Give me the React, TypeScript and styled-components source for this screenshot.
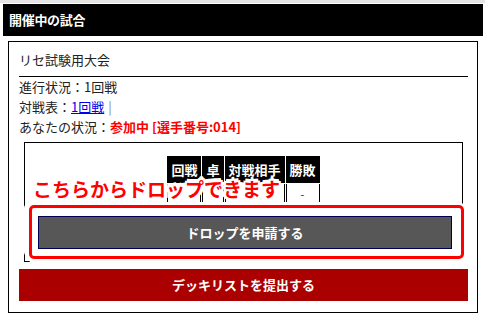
import React from 'react';
import styled, { createGlobalStyle } from 'styled-components';

const GlobalStyle = createGlobalStyle`
  body {
    margin: 0;
    background: #fff;
    font-family: "Noto Sans CJK JP", "Noto Sans", sans-serif;
    color: #222;
  }
`;

const Page = styled.div`
  width: 485px;
  border-top: 3px solid #e4e4e4;
  padding-top: 1px;
`;

const HeaderBar = styled.div`
  margin: 0 2px 0 3px;
  height: 32px;
  background: #000;
  color: #fff;
  font-size: 13px;
  font-weight: bold;
  line-height: 32px;
  padding-left: 6px;
  letter-spacing: -0.3px;
`;

const Card = styled.div`
  margin: 5px 7px 0 8px;
  border: 1px solid #000;
  padding: 0 9px 11px 10px;
`;

const Title = styled.div`
  font-size: 13px;
  line-height: 20px;
  padding: 8px 0 6px;
  border-bottom: 1px solid #000;
`;

const InfoLine = styled.div`
  font-size: 13px;
  line-height: 20px;
`;

const Link = styled.a`
  color: #0000ee;
  text-decoration: underline;
`;

const Sep = styled.span`
  color: #7d8ca3;
  margin-left: 4px;
`;

const Status = styled.span`
  color: #f00;
  font-weight: bold;
`;

const InnerBox = styled.div`
  position: relative;
  margin: 5px 5px 0;
  border: 1px solid #000;
  padding: 12px 0 2px;
`;

const MatchTable = styled.table`
  margin: 0 auto;
  border-collapse: separate;
  border-spacing: 1px;
  font-size: 13px;
`;

const Th = styled.th`
  background: #000;
  color: #fff;
  font-weight: bold;
  height: 27px;
  padding: 0 4px;
  white-space: nowrap;
`;

const Td = styled.td`
  height: 19px;
  border-left: 1px solid #000;
  border-right: 1px solid #000;
  text-align: center;
  padding: 0;
  font-size: 11px;
`;

const Callout = styled.div`
  position: absolute;
  left: 8px;
  top: 36px;
  color: #f00;
  font-size: 19px;
  font-weight: bold;
  line-height: 19px;
  white-space: nowrap;
  text-shadow:
    3px 0 0 #fff, -3px 0 0 #fff, 0 3px 0 #fff, 0 -3px 0 #fff,
    2px 2px 0 #fff, -2px 2px 0 #fff, 2px -2px 0 #fff, -2px -2px 0 #fff,
    4px 0 0 #fff, -4px 0 0 #fff, 0 4px 0 #fff, 0 -4px 0 #fff;
`;

const HighlightFrame = styled.div`
  position: relative;
  margin: 1px -2px 0 4px;
  border: 3px solid #f00;
  border-radius: 5px;
  background: #fff;
  padding: 8px 9px 7px 6px;
  box-shadow: -5px -2px 0 #fff, 0 5px 0 #fff, 0 -3px 0 #fff;
`;

const Button = styled.div<{ $tone: 'gray' | 'red' }>`
  height: ${(p) => (p.$tone === 'gray' ? '31px' : '32px')};
  line-height: ${(p) => (p.$tone === 'gray' ? '31px' : '32px')};
  background: ${(p) => (p.$tone === 'gray' ? '#575757' : '#aa0000')};
  border: ${(p) => (p.$tone === 'gray' ? '1px solid #000050' : 'none')};
  color: #fff;
  font-size: 13px;
  font-weight: bold;
  text-align: center;
  margin-top: ${(p) => (p.$tone === 'red' ? '7px' : '0')};
`;

export default function App() {
  return (
    <>
      <GlobalStyle />
      <Page>
        <HeaderBar>開催中の試合</HeaderBar>
        <Card>
          <Title>リセ試験用大会</Title>
          <InfoLine>進行状況：1回戦</InfoLine>
          <InfoLine>
            対戦表：<Link href="#">1回戦</Link>
            <Sep>|</Sep>
          </InfoLine>
          <InfoLine>
            あなたの状況：<Status>参加中 [選手番号:014]</Status>
          </InfoLine>
          <InnerBox>
            <MatchTable>
              <thead>
                <tr>
                  <Th>回戦</Th>
                  <Th>卓</Th>
                  <Th>対戦相手</Th>
                  <Th>勝敗</Th>
                </tr>
              </thead>
              <tbody>
                <tr>
                  <Td />
                  <Td />
                  <Td />
                  <Td>-</Td>
                </tr>
              </tbody>
            </MatchTable>
            <Callout>こちらからドロップできます</Callout>
            <HighlightFrame>
              <Button $tone="gray">ドロップを申請する</Button>
            </HighlightFrame>
          </InnerBox>
          <Button $tone="red">デッキリストを提出する</Button>
        </Card>
      </Page>
    </>
  );
}
